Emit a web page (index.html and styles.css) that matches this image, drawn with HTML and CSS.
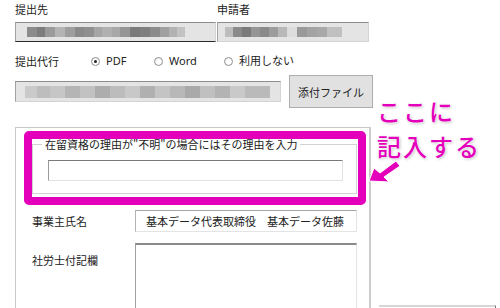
FILE: index.html
```html
<!DOCTYPE html>
<html lang="ja">
<head>
  <meta charset="UTF-8" />
  <title>提出設定</title>
  <link rel="stylesheet" href="styles.css">
</head>
<body>
  <div class="page">
    <div class="top-grid">
      <label class="cap">提出先</label>
      <label class="cap">申請者</label>
      <div class="field field-focus"><span class="mosaic mosaic-a"></span></div>
      <div class="field"><span class="mosaic mosaic-b"></span></div>
    </div>

    <div class="radio-row">
      <span class="cap">提出代行</span>
      <label class="opt"><span class="radio checked"></span>PDF</label>
      <label class="opt"><span class="radio"></span>Word</label>
      <label class="opt"><span class="radio"></span>利用しない</label>
    </div>

    <div class="file-row">
      <div class="field field-file"><span class="mosaic mosaic-c"></span></div>
      <button class="btn" type="button">添付ファイル</button>
    </div>

    <div class="main">
      <div class="panel">
        <div class="mark">
          <fieldset class="group">
            <legend>在留資格の理由が"不明"の場合にはその理由を入力</legend>
            <div class="entry"></div>
          </fieldset>
        </div>

        <div class="form-row">
          <span class="row-label">事業主氏名</span>
          <div class="name-box">基本データ代表取締役　基本データ佐藤</div>
        </div>

        <div class="form-row">
          <span class="row-label note-label">社労士付記欄</span>
          <div class="note-box"></div>
        </div>
      </div>

      <div class="side">
        <div class="side-box"></div>
      </div>
    </div>

    <!-- annotation overlay -->
    <div class="callout">
      <div>ここに</div>
      <div>記入する</div>
    </div>
    <svg class="arrow" width="50" height="40" viewBox="0 0 50 40">
      <polygon points="9,31 14,18 20,23 36,11 40,16 24,27 29,32" fill="#e400bb" stroke="#fff" stroke-width="1" stroke-linejoin="round"/>
    </svg>
  </div>
</body>
</html>
```

FILE: styles.css
```css
body {
  margin: 0;
  font-family: "Noto Sans CJK JP", "Noto Sans", sans-serif;
  font-size: 11px;
  color: #222;
  background: #fff;
}

.page {
  position: relative;
  width: 500px;
  height: 308px;
  overflow: hidden;
  padding-left: 15px;
  box-sizing: border-box;
}

.cap {
  line-height: 14px;
  white-space: nowrap;
}

.top-grid {
  display: grid;
  grid-template-columns: 201px 152px;
  column-gap: 1px;
  row-gap: 6px;
  padding-top: 2px;
}

.field {
  height: 20px;
  box-sizing: border-box;
  background: #e4e4e4;
  border: 1px solid #d4d4d4;
  border-top-color: #8c8c8c;
  border-left-color: #a2a2a2;
  padding: 4px 0 0 0;
}

.field-focus {
  border-bottom: 1px solid #2a2a2a;
}

.mosaic {
  display: block;
  height: 10px;
}

.mosaic-a {
  width: 158px;
  margin-left: 11px;
  background: linear-gradient(90deg,
    #8c8c8c 0 10px, #7d7d7d 10px 18px, #9a9a9a 18px 28px, #b4b4b4 28px 38px,
    #9e9e9e 38px 48px, #8a8a8a 48px 57px, #8f8f8f 57px 67px, #a5a5a5 67px 75px,
    #b0b0b0 75px 85px, #a8a8a8 85px 93px, #959595 93px 103px, #7a7a7a 103px 113px,
    #7f7f7f 113px 123px, #8b8b8b 123px 133px, #a0a0a0 133px 142px, #b2b2b2 142px 150px,
    #c2c2c2 150px 158px);
}

.mosaic-b {
  width: 117px;
  margin-left: 7px;
  background: linear-gradient(90deg,
    #bdbdbd 0 8px, #8a8a8a 8px 17px, #7a7a7a 17px 26px, #959595 26px 35px,
    #8a8a8a 35px 44px, #9c9c9c 44px 53px, #b8b8b8 53px 62px, #dcdcdc 62px 72px,
    #9a9a9a 72px 82px, #a3a3a3 82px 92px, #a8a8a8 92px 102px, #c0c0c0 102px 117px);
}

.mosaic-c {
  width: 245px;
  height: 12px;
  margin-left: 9px;
  background: linear-gradient(90deg,
    #cacaca 0 12px, #bdbdbd 12px 25px, #c6c6c6 25px 40px, #b5b5b5 40px 55px,
    #c2c2c2 55px 70px, #adadad 70px 85px, #bcbcbc 85px 100px, #c8c8c8 100px 115px,
    #b0b0b0 115px 130px, #c4c4c4 130px 145px, #b8b8b8 145px 160px, #a9a9a9 160px 175px,
    #c0c0c0 175px 190px, #b3b3b3 190px 205px, #c9c9c9 205px 220px, #bababa 220px 245px);
}

.radio-row {
  display: grid;
  grid-template-columns: 76px 63px 70px auto;
  align-items: center;
  margin-top: 12px;
  line-height: 14px;
}

.opt {
  display: flex;
  align-items: center;
  gap: 6px;
  font-family: "Noto Sans", "Noto Sans CJK JP", sans-serif;
}

.radio {
  width: 9px;
  height: 9px;
  box-sizing: border-box;
  border: 1px solid #8f8f8f;
  border-radius: 50%;
  background: radial-gradient(circle at 60% 60%, #fff 0 40%, #e2e2e2 100%);
  display: flex;
  align-items: center;
  justify-content: center;
}

.radio.checked::after {
  content: "";
  width: 3px;
  height: 3px;
  border-radius: 50%;
  background: #222;
}

.file-row {
  display: flex;
  align-items: center;
  margin-top: 7px;
}

.field-file {
  width: 266px;
  height: 21px;
  padding-top: 4px;
}

.btn {
  margin-left: 8px;
  width: 84px;
  height: 33px;
  background: #e1e1e1;
  border: 1px solid #adadad;
  border-radius: 0;
  font-family: inherit;
  font-size: 11px;
  color: #222;
  padding: 0;
}

.main {
  display: flex;
  margin-top: 19px;
}

.panel {
  width: 356px;
  height: 200px;
  box-sizing: border-box;
  border: 1px solid #c9c9c9;
  border-right: 2px solid #cbcbcb;
  border-bottom: 0;
  padding-top: 3px;
}

.mark {
  width: 342px;
  height: 74px;
  box-sizing: border-box;
  margin-left: 8px;
  border: 8px solid #e400bb;
  border-radius: 5px;
}

.group {
  margin: 0 1px 0 0;
  height: 55px;
  box-sizing: border-box;
  border: 1px solid #d2d2d2;
  padding: 11px 13px 12px 15px;
}

.group legend {
  padding: 0 3px;
  margin-left: -6px;
  line-height: 10px;
  white-space: nowrap;
}

.entry {
  height: 21px;
  box-sizing: border-box;
  background: #fff;
  border: 1px solid #e2e2e2;
  border-top-color: #7a7a7a;
  border-left-color: #9a9a9a;
}

.form-row {
  display: flex;
  align-items: center;
  padding-left: 16px;
  margin-top: 5px;
}

.form-row + .form-row {
  margin-top: 11px;
  align-items: flex-start;
}

.row-label {
  width: 103px;
  line-height: 14px;
}

.note-label {
  padding-top: 10px;
}

.name-box {
  width: 222px;
  height: 22px;
  box-sizing: border-box;
  border: 1px solid #e4e4e4;
  border-top-color: #a6a6a6;
  border-left-color: #b4b4b4;
  padding-left: 10px;
  line-height: 20px;
  white-space: nowrap;
  overflow: hidden;
}

.note-box {
  width: 222px;
  height: 90px;
  box-sizing: border-box;
  border: 1px solid #e4e4e4;
  border-top: 2px solid #8a8a8a;
  border-left-color: #a0a0a0;
}

.side {
  margin-left: 8px;
}

.side-box {
  width: 117px;
  height: 20px;
  margin-top: 178px;
  box-sizing: border-box;
  border-top: 2px solid #d6d6d6;
  border-right: 1px solid #666;
}

.callout {
  position: absolute;
  left: 377px;
  top: 93px;
  font-size: 24px;
  line-height: 35px;
  letter-spacing: 2px;
  font-weight: 500;
  color: #e400bb;
  text-shadow: 0 0 2px #fff, 0 0 2px #fff, 1px 1px 3px rgba(0, 0, 0, 0.3);
  white-space: nowrap;
}

.arrow {
  position: absolute;
  left: 360px;
  top: 150px;
}
```
